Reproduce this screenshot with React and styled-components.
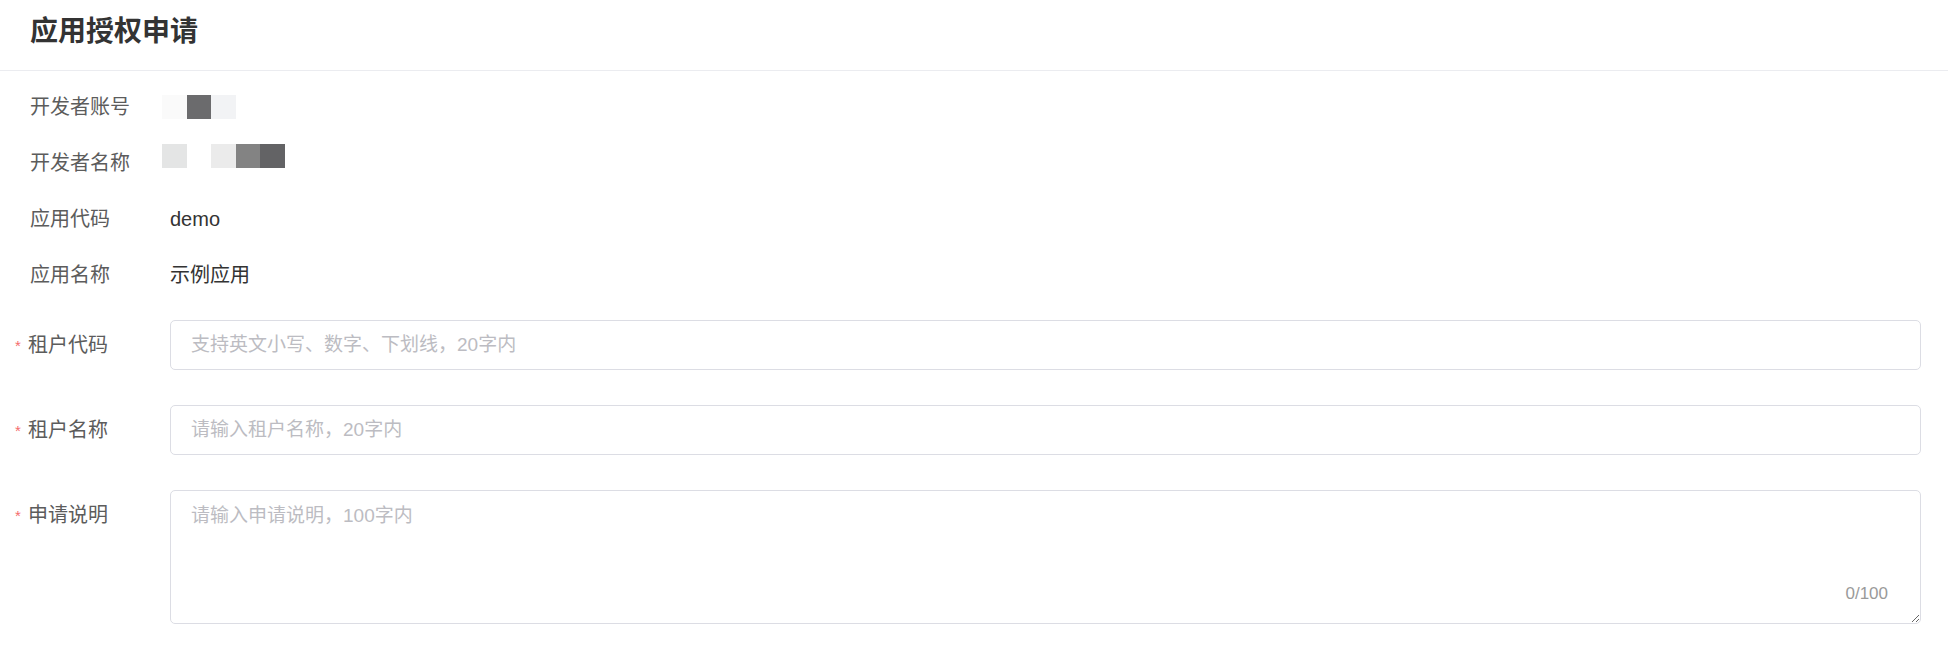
import React from "react";
import styled, { createGlobalStyle } from "styled-components";

const Global = createGlobalStyle`
  html, body { margin: 0; padding: 0; background: #fff; }
  body { font-family: "Liberation Sans", "Noto Sans CJK SC", sans-serif; }
  * { box-sizing: border-box; }
`;

const Page = styled.div`
  width: 1948px;
  background: #fff;
`;

const Header = styled.header`
  height: 71px;
  padding: 12px 0 0 30px;
  border-bottom: 1px solid #ebecf0;
`;

const Title = styled.h1`
  margin: 0;
  font-size: 28px;
  line-height: 40px;
  font-weight: 600;
  color: #333;
`;

const Form = styled.div`
  padding: 8px 27px 0 30px;
  display: flex;
  flex-direction: column;
`;

const InfoRow = styled.div`
  display: flex;
  align-items: center;
  height: 56px;
`;

const FieldRow = styled.div`
  display: flex;
  align-items: flex-start;
  margin-top: ${(p) => p.$gap}px;
`;

const Label = styled.div`
  position: relative;
  width: 140px;
  flex: none;
  font-size: 20px;
  line-height: ${(p) => (p.$tall ? "50px" : "28px")};
  color: #5c5c5c;
  margin-left: ${(p) => (p.$required ? "-2px" : "0")};
  margin-right: ${(p) => (p.$required ? "2px" : "0")};
  &::before {
    content: ${(p) => (p.$required ? '"*"' : "none")};
    position: absolute;
    left: -13px;
    top: 1px;
    color: #f56c6c;
    font-size: 15px;
  }
`;

const Value = styled.div`
  font-size: 20px;
  line-height: 28px;
  color: #333;
`;

const Mosaic = styled.div`
  display: flex;
  margin-left: -8px;
  margin-bottom: ${(p) => p.$lift * 2}px;
`;

const Tile = styled.span`
  width: 24.5px;
  height: 24px;
  background: ${(p) => p.$c};
`;

const Input = styled.input`
  flex: 1;
  height: 50px;
  border: 1px solid #dcdde4;
  border-radius: 5px;
  padding: 0 20px;
  font-size: 19px;
  font-family: inherit;
  color: #333;
  outline: none;
  &::placeholder { color: #bcbcc2; }
`;

const AreaWrap = styled.div`
  flex: 1;
  position: relative;
  display: flex;
`;

const TextArea = styled.textarea`
  flex: 1;
  height: 134px;
  border: 1px solid #dcdde4;
  border-radius: 5px;
  padding: 11px 20px;
  font-size: 19px;
  line-height: 28px;
  font-family: inherit;
  color: #333;
  outline: none;
  resize: vertical;
  &::placeholder { color: #bcbcc2; }
`;

const Counter = styled.span`
  position: absolute;
  right: 33px;
  bottom: 19px;
  font-size: 17px;
  line-height: 22px;
  color: #9a9a9a;
`;

const tilesA = ["#fafafa", "#6b6b6d", "#f2f3f5"];
const tilesB = ["#e4e5e5", "#ffffff", "#ebebeb", "#838383", "#636365"];

export default function App() {
  return (
    <Page>
      <Global />
      <Header>
        <Title>应用授权申请</Title>
      </Header>
      <Form>
        <InfoRow>
          <Label>开发者账号</Label>
          <Mosaic $lift={0}>
            {tilesA.map((c, i) => (
              <Tile key={i} $c={c} />
            ))}
          </Mosaic>
        </InfoRow>
        <InfoRow>
          <Label>开发者名称</Label>
          <Mosaic $lift={7}>
            {tilesB.map((c, i) => (
              <Tile key={i} $c={c} />
            ))}
          </Mosaic>
        </InfoRow>
        <InfoRow>
          <Label>应用代码</Label>
          <Value>demo</Value>
        </InfoRow>
        <InfoRow>
          <Label>应用名称</Label>
          <Value>示例应用</Value>
        </InfoRow>
        <FieldRow $gap={17}>
          <Label $required $tall>租户代码</Label>
          <Input placeholder="支持英文小写、数字、下划线，20字内" />
        </FieldRow>
        <FieldRow $gap={35}>
          <Label $required $tall>租户名称</Label>
          <Input placeholder="请输入租户名称，20字内" />
        </FieldRow>
        <FieldRow $gap={35}>
          <Label $required $tall>申请说明</Label>
          <AreaWrap>
            <TextArea placeholder="请输入申请说明，100字内" />
            <Counter>0/100</Counter>
          </AreaWrap>
        </FieldRow>
      </Form>
    </Page>
  );
}
